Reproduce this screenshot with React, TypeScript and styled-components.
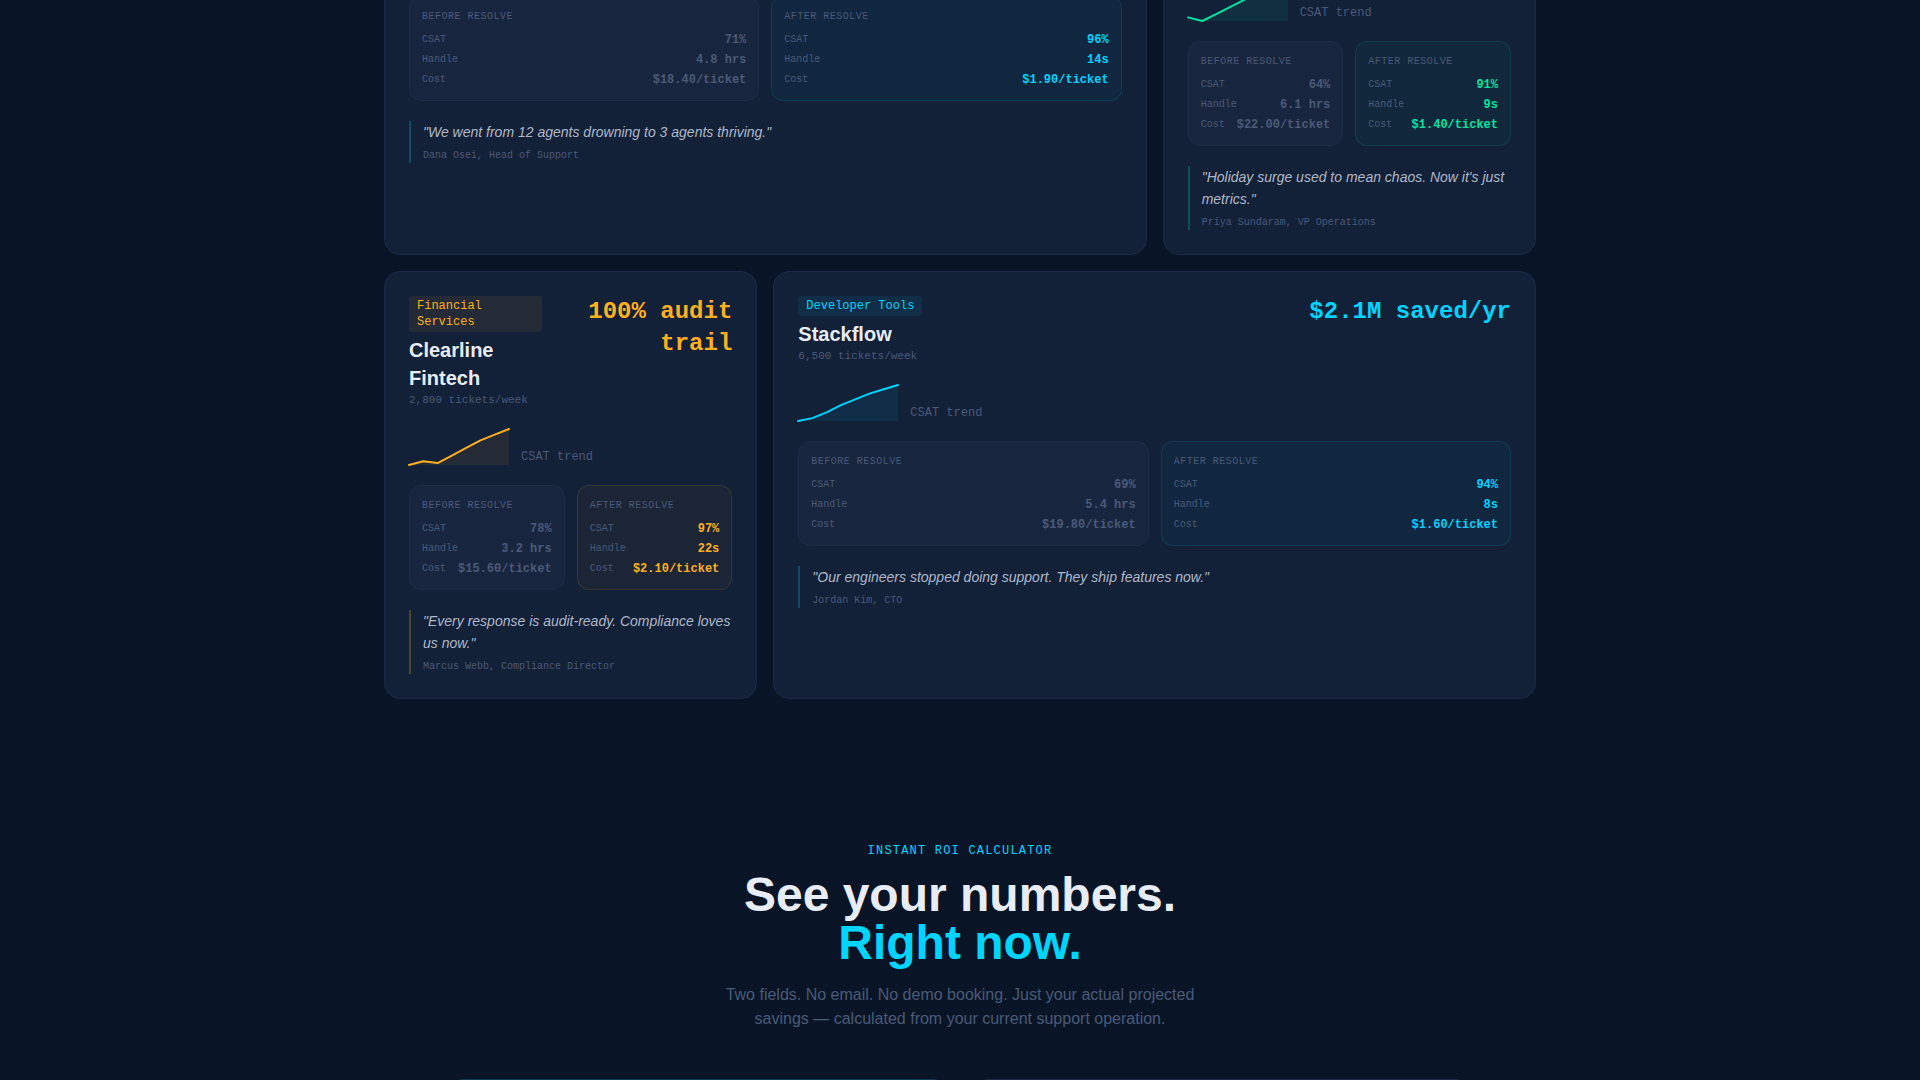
import React from "react";
import styled, { createGlobalStyle } from "styled-components";

const sans = '"Liberation Sans", Arial, sans-serif';
const mono = '"Liberation Mono", "Courier New", monospace';

const cyan = "0, 212, 255";
const green = "0, 229, 160";
const amber = "255, 176, 32";
const muted = "#4a5a78";

const GlobalStyle = createGlobalStyle`
  *, *::before, *::after { box-sizing: border-box; }
  body { margin: 0; background: #091526; color: #e8edf5; font-family: ${sans}; }
  h2, h3, p, dl, dd, dt, figure, blockquote { margin: 0; }
`;

const Page = styled.main`
  height: 100vh;
  overflow: hidden;
`;

const Stories = styled.section`
  display: grid;
  grid-template-columns: repeat(3, minmax(0, 1fr));
  gap: 16px;
  max-width: 1152px;
  margin: -40px auto 0;
`;

const Card = styled.article<{ $wide?: boolean; $lead?: number }>`
  grid-column: span ${(p) => (p.$wide ? 2 : 1)};
  padding: ${(p) => p.$lead ?? 24}px 24px 24px;
  background: #122038;
  border: 1px solid #1b2a47;
  border-radius: 16px;
`;

const CardHeader = styled.header`
  display: flex;
  justify-content: space-between;
  align-items: flex-start;
  margin-bottom: 20px;
`;

const Company = styled.div`
  display: flex;
  flex-direction: column;
  align-items: flex-start;
`;

const Tag = styled.span<{ $accent: string }>`
  padding: 2px 8px;
  margin-bottom: 4px;
  border-radius: 4px;
  background: rgba(${(p) => p.$accent}, 0.08);
  color: rgb(${(p) => p.$accent});
  font: 12px/16px ${mono};
`;

const Name = styled.h3`
  font: bold 20px/28px ${sans};
`;

const Volume = styled.p`
  color: ${muted};
  font: 11px/17px ${mono};
`;

const Result = styled.p<{ $accent: string }>`
  color: rgb(${(p) => p.$accent});
  font: bold 24px/32px ${mono};
  text-align: right;
`;

const Trend = styled.figure`
  display: flex;
  align-items: flex-end;
  gap: 12px;
  margin-bottom: 20px;
`;

const TrendLabel = styled.figcaption`
  color: ${muted};
  font: 12px/16px ${mono};
`;

const Chart = styled.svg`
  display: block;
  overflow: visible;
`;

const Comparison = styled.div`
  display: grid;
  grid-template-columns: repeat(2, minmax(0, 1fr));
  gap: 12px;
  margin-bottom: 20px;
`;

const Panel = styled.div<{ $accent?: string }>`
  padding: 12px;
  border: 1px solid ${(p) => (p.$accent ? `rgba(${p.$accent}, 0.12)` : "#1d2c48")};
  border-radius: 12px;
  background: ${(p) => (p.$accent ? `rgba(${p.$accent}, 0.04)` : "#18253e")};
`;

const PanelTitle = styled.p`
  margin-bottom: 8px;
  color: ${muted};
  font: 10px/15px ${mono};
  letter-spacing: 0.05em;
  text-transform: uppercase;
`;

const Metrics = styled.dl`
  display: flex;
  flex-direction: column;
  gap: 4px;
`;

const Metric = styled.div`
  display: flex;
  justify-content: space-between;
  align-items: flex-start;
`;

const MetricName = styled.dt`
  color: ${muted};
  font: 10px/15px ${mono};
`;

const MetricValue = styled.dd<{ $accent?: string }>`
  color: ${(p) => (p.$accent ? `rgb(${p.$accent})` : muted)};
  font: bold 12px/16px ${mono};
`;

const Quote = styled.blockquote<{ $accent: string }>`
  padding-left: 12px;
  border-left: 2px solid rgba(${(p) => p.$accent}, 0.25);
`;

const QuoteText = styled.p`
  color: #b0b8c8;
  font: italic 14px/22px ${sans};
`;

const Author = styled.p`
  margin-top: 5px;
  color: ${muted};
  font: 10px/15px ${mono};
`;

const Calculator = styled.section`
  max-width: 1024px;
  margin: 0 auto;
  padding-top: 144px;
`;

const Intro = styled.header`
  display: flex;
  flex-direction: column;
  align-items: center;
  margin-bottom: 48px;
  text-align: center;
`;

const Eyebrow = styled.p`
  margin-bottom: 12px;
  color: rgb(${cyan});
  font: 12px/16px ${mono};
  letter-spacing: 0.1em;
  text-transform: uppercase;
`;

const Title = styled.h2`
  margin-bottom: 16px;
  font: bold 48px/48px ${sans};
`;

const TitleAccent = styled.span`
  display: block;
  color: rgb(${cyan});
`;

const Lede = styled.p`
  max-width: 512px;
  color: ${muted};
  font: 16px/24px ${sans};
`;

const CalculatorGrid = styled.div`
  display: grid;
  grid-template-columns: repeat(2, minmax(0, 1fr));
  gap: 24px;
`;

const CalculatorCard = styled.div<{ $active?: boolean }>`
  min-height: 320px;
  border: 1px solid ${(p) => (p.$active ? `rgba(${cyan}, 0.15)` : "#1b2a47")};
  border-radius: 16px;
  background: #122038;
`;

type Figures = { csat: string; handle: string; cost: string };

type Story = {
  accent: string;
  before: Figures;
  after: Figures;
  quote: string;
  author: string;
};

function Sparkline({ values, accent }: { values: number[]; accent: string }) {
  const w = 100;
  const h = 36;
  const min = Math.min(...values);
  const range = Math.max(...values) - min;
  const line = values
    .map((v, i) => `${(i / (values.length - 1)) * w},${h - ((v - min) / range) * h}`)
    .join(" ");
  return (
    <Trend>
      <Chart width={w} height={h} viewBox={`0 0 ${w} ${h}`} aria-hidden="true">
        <polygon points={`0,${h} ${line} ${w},${h}`} fill={`rgba(${accent}, 0.08)`} />
        <polyline
          points={line}
          fill="none"
          stroke={`rgb(${accent})`}
          strokeWidth={2}
          strokeLinecap="round"
          strokeLinejoin="round"
        />
      </Chart>
      <TrendLabel>CSAT trend</TrendLabel>
    </Trend>
  );
}

function FigurePanel({ title, figures, accent }: { title: string; figures: Figures; accent?: string }) {
  const rows = [
    ["CSAT", figures.csat],
    ["Handle", figures.handle],
    ["Cost", figures.cost],
  ];
  return (
    <Panel $accent={accent}>
      <PanelTitle>{title}</PanelTitle>
      <Metrics>
        {rows.map(([name, value]) => (
          <Metric key={name}>
            <MetricName>{name}</MetricName>
            <MetricValue $accent={accent}>{value}</MetricValue>
          </Metric>
        ))}
      </Metrics>
    </Panel>
  );
}

function Outcome({ accent, before, after, quote, author }: Story) {
  return (
    <>
      <Comparison>
        <FigurePanel title="Before Resolve" figures={before} />
        <FigurePanel title="After Resolve" figures={after} accent={accent} />
      </Comparison>
      <Quote $accent={accent}>
        <QuoteText>{`"${quote}"`}</QuoteText>
        <Author>{author}</Author>
      </Quote>
    </>
  );
}

function Heading(p: { accent: string; tag: string; name: string; volume: string; result: string }) {
  return (
    <CardHeader>
      <Company>
        <Tag $accent={p.accent}>{p.tag}</Tag>
        <Name>{p.name}</Name>
        <Volume>{p.volume}</Volume>
      </Company>
      <Result $accent={p.accent}>{p.result}</Result>
    </CardHeader>
  );
}

export default function App() {
  return (
    <Page>
      <GlobalStyle />
      <Stories>
        <Card $wide $lead={35}>
          <Outcome
            accent={cyan}
            before={{ csat: "71%", handle: "4.8 hrs", cost: "$18.40/ticket" }}
            after={{ csat: "96%", handle: "14s", cost: "$1.90/ticket" }}
            quote="We went from 12 agents drowning to 3 agents thriving."
            author="Dana Osei, Head of Support"
          />
        </Card>
        <Card>
          <Sparkline accent={green} values={[64, 61, 67, 73, 79, 84, 88, 91]} />
          <Outcome
            accent={green}
            before={{ csat: "64%", handle: "6.1 hrs", cost: "$22.00/ticket" }}
            after={{ csat: "91%", handle: "9s", cost: "$1.40/ticket" }}
            quote="Holiday surge used to mean chaos. Now it's just metrics."
            author="Priya Sundaram, VP Operations"
          />
        </Card>
        <Card>
          <Heading
            accent={amber}
            tag="Financial Services"
            name="Clearline Fintech"
            volume="2,800 tickets/week"
            result="100% audit trail"
          />
          <Sparkline accent={amber} values={[78, 80, 79, 83, 87, 91, 94, 97]} />
          <Outcome
            accent={amber}
            before={{ csat: "78%", handle: "3.2 hrs", cost: "$15.60/ticket" }}
            after={{ csat: "97%", handle: "22s", cost: "$2.10/ticket" }}
            quote="Every response is audit-ready. Compliance loves us now."
            author="Marcus Webb, Compliance Director"
          />
        </Card>
        <Card $wide>
          <Heading
            accent={cyan}
            tag="Developer Tools"
            name="Stackflow"
            volume="6,500 tickets/week"
            result="$2.1M saved/yr"
          />
          <Sparkline accent={cyan} values={[69, 71, 75, 80, 84, 88, 91, 94]} />
          <Outcome
            accent={cyan}
            before={{ csat: "69%", handle: "5.4 hrs", cost: "$19.80/ticket" }}
            after={{ csat: "94%", handle: "8s", cost: "$1.60/ticket" }}
            quote="Our engineers stopped doing support. They ship features now."
            author="Jordan Kim, CTO"
          />
        </Card>
      </Stories>
      <Calculator>
        <Intro>
          <Eyebrow>Instant ROI Calculator</Eyebrow>
          <Title>
            See your numbers.
            <TitleAccent>Right now.</TitleAccent>
          </Title>
          <Lede>
            Two fields. No email. No demo booking. Just your actual projected savings — calculated from your
            current support operation.
          </Lede>
        </Intro>
        <CalculatorGrid>
          <CalculatorCard $active />
          <CalculatorCard />
        </CalculatorGrid>
      </Calculator>
    </Page>
  );
}
